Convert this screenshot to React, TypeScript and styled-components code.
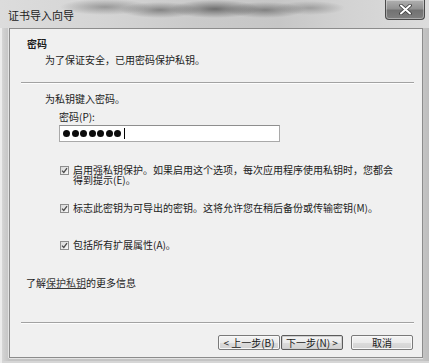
import React from 'react'
import styled, { createGlobalStyle } from 'styled-components'

const GlobalStyle = createGlobalStyle`
  html, body {
    margin: 0;
    padding: 0;
    background: #fff;
  }
  body {
    font-family: "Noto Sans CJK SC", "Noto Sans", sans-serif;
    color: #1c1c1c;
  }
`

const Window = styled.div`
  width: 429px;
  height: 363px;
  box-sizing: border-box;
  padding: 0 6px 5px 9px;
  display: flex;
  flex-direction: column;
  background: linear-gradient(90deg, #dedede 0px, #cfcfcf 4px, #c4c4c4 9px, #c4c4c4 calc(100% - 6px), #bdbdbd 100%);
  box-shadow: inset 2px 0 0 #ececec, inset 0 -2px 0 #d6d6d6;
`

const TitleBar = styled.div`
  height: 28px;
  margin: 0 -6px 0 -9px;
  padding: 0 4px 0 8px;
  display: flex;
  align-items: flex-start;
  justify-content: space-between;
  background:
    radial-gradient(ellipse 45px 8px at 105px 7px, rgba(80,80,80,0.45), rgba(80,80,80,0)),
    radial-gradient(ellipse 40px 8px at 160px 10px, rgba(60,60,60,0.5), rgba(60,60,60,0)),
    radial-gradient(ellipse 45px 9px at 215px 9px, rgba(50,50,50,0.6), rgba(50,50,50,0)),
    radial-gradient(ellipse 40px 8px at 265px 10px, rgba(60,60,60,0.5), rgba(60,60,60,0)),
    radial-gradient(ellipse 35px 7px at 310px 8px, rgba(90,90,90,0.4), rgba(90,90,90,0)),
    linear-gradient(90deg, #dcdcdc 0%, #d4d4d4 25%, #cacaca 45%, #c6c6c6 65%, #d2d2d2 80%, #dcdcdc 100%);
`

const Title = styled.span`
  font-size: 11px;
  line-height: 30px;
  color: #1a1a1a;
`

const CloseButton = styled.button`
  width: 40px;
  height: 20px;
  margin: 0;
  padding: 0;
  border: 1px solid #4a4a4a;
  border-top: 0;
  border-radius: 0 0 4px 4px;
  background: linear-gradient(180deg, #b0b0b0 0%, #929292 45%, #727272 55%, #808080 100%);
  box-shadow: inset 0 0 0 1px rgba(255,255,255,0.35);
  display: flex;
  align-items: center;
  justify-content: center;
`

const Client = styled.div`
  flex: 1;
  display: flex;
  flex-direction: column;
  background: #f0f0f0;
  border: 1px solid #8c8c8c;
  box-shadow: -1px 0 0 #e4e4e4, 0 1px 0 #e4e4e4;
`

const Header = styled.div`
  padding: 7px 0 14px 17px;
  font-size: 10px;
  line-height: 16px;
`

const HeaderTitle = styled.div`
  font-weight: 700;
`

const HeaderText = styled.div`
  padding-left: 18px;
`

const Separator = styled.div`
  height: 1px;
  margin: 0 8px 0 11px;
  background: #a2a2a2;
  box-shadow: 0 1px 0 #fdfdfd;
`

const BottomSeparator = styled(Separator)`
  margin-top: auto;
`

const Body = styled.div`
  display: flex;
  flex-direction: column;
  font-size: 10px;
  line-height: 16px;
`

const Prompt = styled.div`
  margin: 8px 0 0 35px;
`

const FieldLabel = styled.div`
  margin: 2px 0 0 49px;
`

const PasswordBox = styled.div`
  width: 221px;
  height: 17px;
  box-sizing: border-box;
  margin-left: 49px;
  padding-left: 3px;
  border: 1px solid #a9a9a9;
  border-top-color: #8e8e8e;
  background: #fff;
  display: flex;
  align-items: center;
  gap: 1.5px;
`

const Dot = styled.span`
  width: 7px;
  height: 7px;
  border-radius: 50%;
  background: #0c0c0c;
`

const Caret = styled.span`
  width: 1px;
  height: 11px;
  margin-left: 1px;
  background: #000;
`

const OptionRow = styled.label<{ $top: number }>`
  margin: ${p => p.$top}px 0 0 50px;
  display: flex;
  align-items: flex-start;
  gap: 4px;
  line-height: 10px;
`

const Box = styled.span`
  flex: none;
  width: 9px;
  height: 9px;
  box-sizing: border-box;
  margin-top: 1px;
  border: 1px solid #8e8e8e;
  background: linear-gradient(135deg, #d9d9d9, #f7f7f7);
  display: flex;
  align-items: center;
  justify-content: center;
`

const OptionText = styled.span`
  width: 326px;
`

const MoreInfo = styled.div`
  margin: 25px 0 0 16px;
`

const Link = styled.span`
  color: #3a3a3a;
  text-decoration: underline;
`

const Footer = styled.div`
  padding: 12px 9px 7px 0;
  display: flex;
  justify-content: flex-end;
  gap: 1px;
`

const Button = styled.button<{ $gapLeft?: number; $default?: boolean }>`
  width: 62px;
  height: 15px;
  margin: 0 0 0 ${p => p.$gapLeft ?? 0}px;
  padding: 0;
  font-family: "Noto Sans CJK SC", "Noto Sans", sans-serif;
  font-size: 10px;
  line-height: 13px;
  color: #1a1a1a;
  border: 1px solid ${p => (p.$default ? '#5c5c5c' : '#7a7a7a')};
  border-radius: 2px;
  background: linear-gradient(180deg, #f4f4f4 0%, #ebebeb 50%, #dcdcdc 51%, #d2d2d2 100%);
  box-shadow: inset 0 0 0 1px ${p => (p.$default ? '#cfcfcf' : '#f8f8f8')};
`

function Check() {
  return (
    <svg width="7" height="7" viewBox="0 0 7 7">
      <path d="M1 3.6 L2.8 5.4 L6 1.2" fill="none" stroke="#4a4a4a" strokeWidth="1.3" />
    </svg>
  )
}

const options = [
  { top: 23, text: '启用强私钥保护。如果启用这个选项，每次应用程序使用私钥时，您都会得到提示(E)。' },
  { top: 18, text: '标志此密钥为可导出的密钥。这将允许您在稍后备份或传输密钥(M)。' },
  { top: 27, text: '包括所有扩展属性(A)。' },
]

export default function App() {
  return (
    <>
      <GlobalStyle />
      <Window>
        <TitleBar>
          <Title>证书导入向导</Title>
          <CloseButton aria-label="关闭">
            <svg width="13" height="11" viewBox="0 0 13 11">
              <path d="M2 1.5 L11 9.5 M11 1.5 L2 9.5" stroke="#3a3a3a" strokeWidth="3.6" strokeLinecap="round" />
              <path d="M2 1.5 L11 9.5 M11 1.5 L2 9.5" stroke="#fff" strokeWidth="2" strokeLinecap="round" />
            </svg>
          </CloseButton>
        </TitleBar>
        <Client>
          <Header>
            <HeaderTitle>密码</HeaderTitle>
            <HeaderText>为了保证安全，已用密码保护私钥。</HeaderText>
          </Header>
          <Separator />
          <Body>
            <Prompt>为私钥键入密码。</Prompt>
            <FieldLabel>密码(P):</FieldLabel>
            <PasswordBox>
              {Array.from({ length: 7 }).map((_, i) => (
                <Dot key={i} />
              ))}
              <Caret />
            </PasswordBox>
            {options.map(o => (
              <OptionRow key={o.text} $top={o.top}>
                <Box>
                  <Check />
                </Box>
                <OptionText>{o.text}</OptionText>
              </OptionRow>
            ))}
            <MoreInfo>
              了解<Link>保护私钥</Link>的更多信息
            </MoreInfo>
          </Body>
          <BottomSeparator />
          <Footer>
            <Button>&lt; 上一步(B)</Button>
            <Button $default>下一步(N) &gt;</Button>
            <Button $gapLeft={7}>取消</Button>
          </Footer>
        </Client>
      </Window>
    </>
  )
}
